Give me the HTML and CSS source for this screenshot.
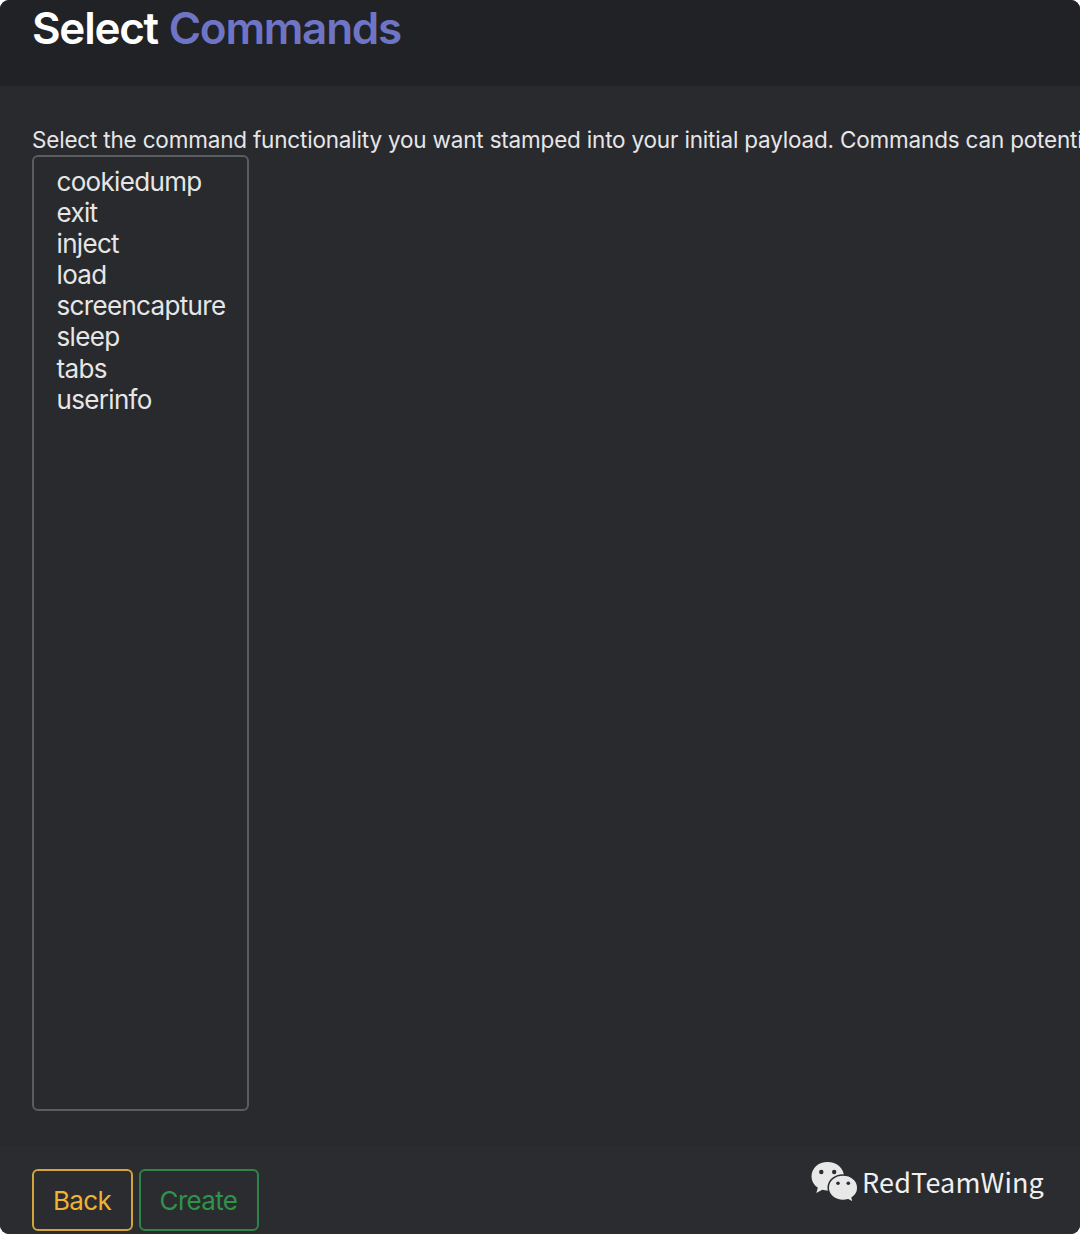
FILE: index.html
```html
<!DOCTYPE html>
<html lang="en">
<head>
<meta charset="utf-8">
<title>Select Commands</title>
<link rel="stylesheet" href="styles.css">
</head>
<body>
<main class="dialog">
  <header class="dialog-header">
    <h1 class="title">Select <span class="accent">Commands</span></h1>
  </header>
  <section class="dialog-body">
    <p class="description">Select the command functionality you want stamped into your initial payload. Commands can potenti</p>
    <ul class="command-list">
      <li>cookiedump</li>
      <li>exit</li>
      <li>inject</li>
      <li>load</li>
      <li>screencapture</li>
      <li>sleep</li>
      <li>tabs</li>
      <li>userinfo</li>
    </ul>
  </section>
  <footer class="dialog-footer">
    <button class="btn btn-back">Back</button>
    <button class="btn btn-create">Create</button>
    <div class="credit">
      <svg class="credit-icon" width="48" height="42" viewBox="0 0 48 42">
        <path class="bubble" d="M16.500 1C7.500 1 0.500 7 0.500 15.500c0 4.700 2.300 8.500 6.300 11.200L5.300 32l6-3.200c2 .6 4.500 1 7 .8C27 29 33 23 33 15.500 33 7 25.500 1 16.500 1Z"/>
        <path class="bubble bubble-front" d="M32 14c-8.300 0-14.800 5.500-14.800 12.800S23.700 39.600 32 39.600c1.800 0 3.600-.3 5.200-.8l5.300 2.900-1.400-4.800c3.500-2.300 5.700-6 5.700-10.100C46.800 19.500 40.300 14 32 14Z"/>
        <circle class="eye" cx="10.300" cy="11" r="2.200"/>
        <circle class="eye" cx="23.200" cy="11" r="2.200"/>
        <circle class="eye" cx="27" cy="22.300" r="1.800"/>
        <circle class="eye" cx="37.300" cy="22.300" r="1.800"/>
      </svg>
      <span class="credit-name">RedTeamWing</span>
    </div>
  </footer>
</main>
</body>
</html>
```
FILE: styles.css
```css
* {
  box-sizing: border-box;
}

body {
  margin: 0;
  background: #fff;
  color: #e6e6e7;
  font-family: Inter, "Liberation Sans", sans-serif;
}

.dialog {
  display: flex;
  flex-direction: column;
  width: 1080px;
  height: 1234px;
  overflow: hidden;
  border-radius: 9px;
  background: #292a2e;
}

.dialog-header {
  height: 86px;
  padding-left: 32px;
  background: #212226;
}

.title {
  margin: 0;
  color: #fff;
  font-size: 44px;
  font-weight: 600;
  line-height: 56px;
  letter-spacing: -1.25px;
  word-spacing: 1px;
}

.accent {
  color: #6f75c5;
}

.dialog-body {
  flex: 1;
  padding: 39px 0 0 32px;
}

.description {
  margin: 0;
  font-size: 22.500px;
  line-height: 30px;
  letter-spacing: -0.19px;
  white-space: nowrap;
}

.command-list {
  width: 217px;
  height: 956px;
  margin: 0;
  padding: 9px 0 0 22.500px;
  border: 2px solid #5b5c60;
  border-radius: 6px;
  list-style: none;
  font-size: 26px;
  line-height: 31.100px;
  letter-spacing: -0.67px;
}

.dialog-footer {
  display: flex;
  align-items: flex-start;
  gap: 7px;
  height: 88px;
  padding: 23px 36px 0 32px;
  background: #2b2c2f;
}

.btn {
  height: 62px;
  padding: 2px 1px 0 0;
  border: 2px solid;
  border-radius: 6px;
  background: transparent;
  font: 26px/56px Inter, "Liberation Sans", sans-serif;
  letter-spacing: -0.67px;
}

.btn-back {
  width: 101px;
  margin-right: -1px;
  border-color: #d3a43a;
  color: #edb332;
}

.btn-create {
  width: 120px;
  border-color: #2f8548;
  color: #2e9449;
}

.credit {
  display: flex;
  align-items: center;
  gap: 3px;
  height: 42px;
  margin: -8px 0 0 auto;
}

.credit-icon {
  flex: none;
}

.bubble {
  fill: #e7e8e7;
}

.bubble-front {
  stroke: #2b2c2f;
  stroke-width: 1.500;
}

.eye {
  fill: #2b2c2f;
}

.credit-name {
  color: #f0f0f0;
  font-family: "Noto Sans CJK SC", "Noto Sans", sans-serif;
  font-size: 27px;
  line-height: 40px;
  padding-bottom: 1px;
  letter-spacing: 0.15px;
}
```
